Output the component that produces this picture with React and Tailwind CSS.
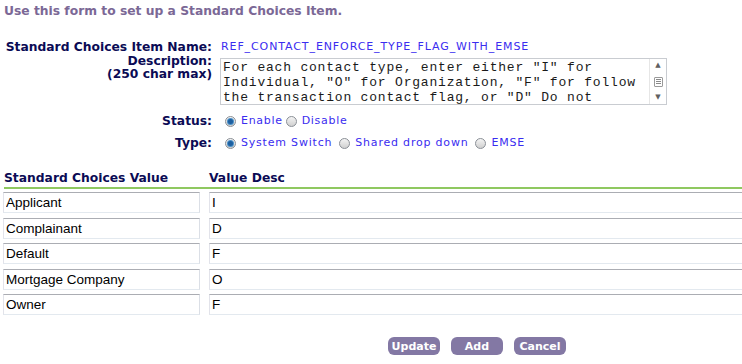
import { useState } from "react";

const rows = [
  { value: "Applicant", desc: "I" },
  { value: "Complainant", desc: "D" },
  { value: "Default", desc: "F" },
  { value: "Mortgage Company", desc: "O" },
  { value: "Owner", desc: "F" },
];

const Radio = ({ checked }) => (
  <span className="inline-block shrink-0 w-[11px] h-[11px] rounded-full border border-[#8a8f96] bg-gradient-to-b from-[#f4f4f4] to-[#d0d0d0] relative mr-[5px]">
    {checked && (
      <span className="absolute left-[2px] top-[2px] w-[5px] h-[5px] rounded-full bg-[#1d5fa0] shadow-[0_0_0_1px_#4a90c8]" />
    )}
  </span>
);

const App = () => {
  const [status, setStatus] = useState("enable");
  const [type, setType] = useState("system");

  return (
    <div className="w-[742px] h-[364px] overflow-hidden bg-white font-['DejaVu_Sans',Verdana,sans-serif] text-[12.3px]">
      {/* Intro */}
      <p className="pl-[4px] pt-[4px] font-bold text-[#7b6896] leading-[15px]">
        Use this form to set up a Standard Choices Item.
      </p>

      {/* Item fields */}
      <div className="grid grid-cols-[212px_1fr] gap-x-[8px] mt-[21px] text-[#0b0b55]">
        <div className="text-right font-bold leading-[14px] whitespace-nowrap">Standard Choices Item Name:</div>
        <div className="text-[11px] tracking-[0.9px] leading-[14px] text-[#3a2cf0] pl-[1px] whitespace-nowrap">
          REF_CONTACT_ENFORCE_TYPE_FLAG_WITH_EMSE
        </div>

        <div className="text-right font-bold leading-[13px] mt-[1px]">
          <div>Description:</div>
          <div>(250 char max)</div>
        </div>
        <div className="mt-[4px] w-[447px] h-[47px] border border-[#c9ccd1] flex">
          <div className="flex-1 pl-[2px] pt-[1px] font-['Liberation_Mono',monospace] text-[13px] tracking-[0.8px] leading-[15px] text-[#1a1a1a] overflow-hidden whitespace-pre">
            {'For each contact type, enter either "I" for\nIndividual, "O" for Organization, "F" for follow\nthe transaction contact flag, or "D" Do not'}
          </div>
          <div className="w-[17px] border-l border-[#e6e6e6] flex flex-col items-center justify-between py-[3px] text-[#606060] text-[7px] leading-none">
            <span>▲</span>
            <span className="w-[9px] h-[10px] border border-[#9a9a9a] rounded-[1px] flex flex-col justify-center gap-[1px] px-[1px]">
              <span className="h-[1px] bg-[#8a8a8a]" />
              <span className="h-[1px] bg-[#8a8a8a]" />
              <span className="h-[1px] bg-[#8a8a8a]" />
            </span>
            <span>▼</span>
          </div>
        </div>

        <div className="text-right font-bold leading-[14px] mt-[9px]">Status:</div>
        <div className="mt-[9px] leading-[14px] text-[11px] tracking-[0.7px] text-[#3a2cf0] pl-[5px] flex items-center">
          <label className="flex items-center mr-[3px]" onClick={() => setStatus("enable")}>
            <Radio checked={status === "enable"} />
            Enable
          </label>
          <label className="flex items-center" onClick={() => setStatus("disable")}>
            <Radio checked={status === "disable"} />
            Disable
          </label>
        </div>

        <div className="text-right font-bold leading-[14px] mt-[8px]">Type:</div>
        <div className="mt-[8px] leading-[14px] text-[11px] tracking-[0.8px] text-[#3a2cf0] pl-[5px] flex items-center gap-[7px]">
          <label className="flex items-center" onClick={() => setType("system")}>
            <Radio checked={type === "system"} />
            System Switch
          </label>
          <label className="flex items-center" onClick={() => setType("shared")}>
            <Radio checked={type === "shared"} />
            Shared drop down
          </label>
          <label className="flex items-center" onClick={() => setType("emse")}>
            <Radio checked={type === "emse"} />
            EMSE
          </label>
        </div>
      </div>

      {/* Values table */}
      <div className="mt-[21px] pl-[4px]">
        <div className="flex font-bold text-[#0b0b55] leading-[14px]">
          <div className="w-[205px]">Standard Choices Value</div>
          <div>Value Desc</div>
        </div>
        <div className="h-[2px] bg-[#8fc860] mt-[2px]" />
        <div className="flex flex-col gap-[4.5px] mt-[3px] -ml-[1px]">
          {rows.map((r) => (
            <div key={r.value} className="flex gap-[9px]">
              <input
                defaultValue={r.value}
                className="shrink-0 w-[197px] h-[21px] px-[2px] border border-[#abadb3] border-b-[#e3e9ef] border-l-[#e2e3ea] border-r-[#dbdfe6] font-['Liberation_Sans',Arial,sans-serif] text-[13.5px] text-black outline-none"
              />
              <input
                defaultValue={r.desc}
                className="shrink-0 w-[560px] h-[21px] px-[2px] border border-[#abadb3] border-b-[#e3e9ef] border-l-[#e2e3ea] font-['Liberation_Sans',Arial,sans-serif] text-[13.5px] text-black outline-none"
              />
            </div>
          ))}
        </div>
      </div>

      {/* Buttons */}
      <div className="flex gap-[11px] pl-[388px] mt-[22px]">
        <button className="w-[52px] h-[18px] rounded-[6px] bg-[#8378a4] text-white font-bold text-[11px] leading-none">
          Update
        </button>
        <button className="w-[52px] h-[18px] rounded-[6px] bg-[#8378a4] text-white font-bold text-[11px] leading-none">
          Add
        </button>
        <button className="w-[52px] h-[18px] rounded-[6px] bg-[#8378a4] text-white font-bold text-[11px] leading-none">
          Cancel
        </button>
      </div>
    </div>
  );
};

export default App;
